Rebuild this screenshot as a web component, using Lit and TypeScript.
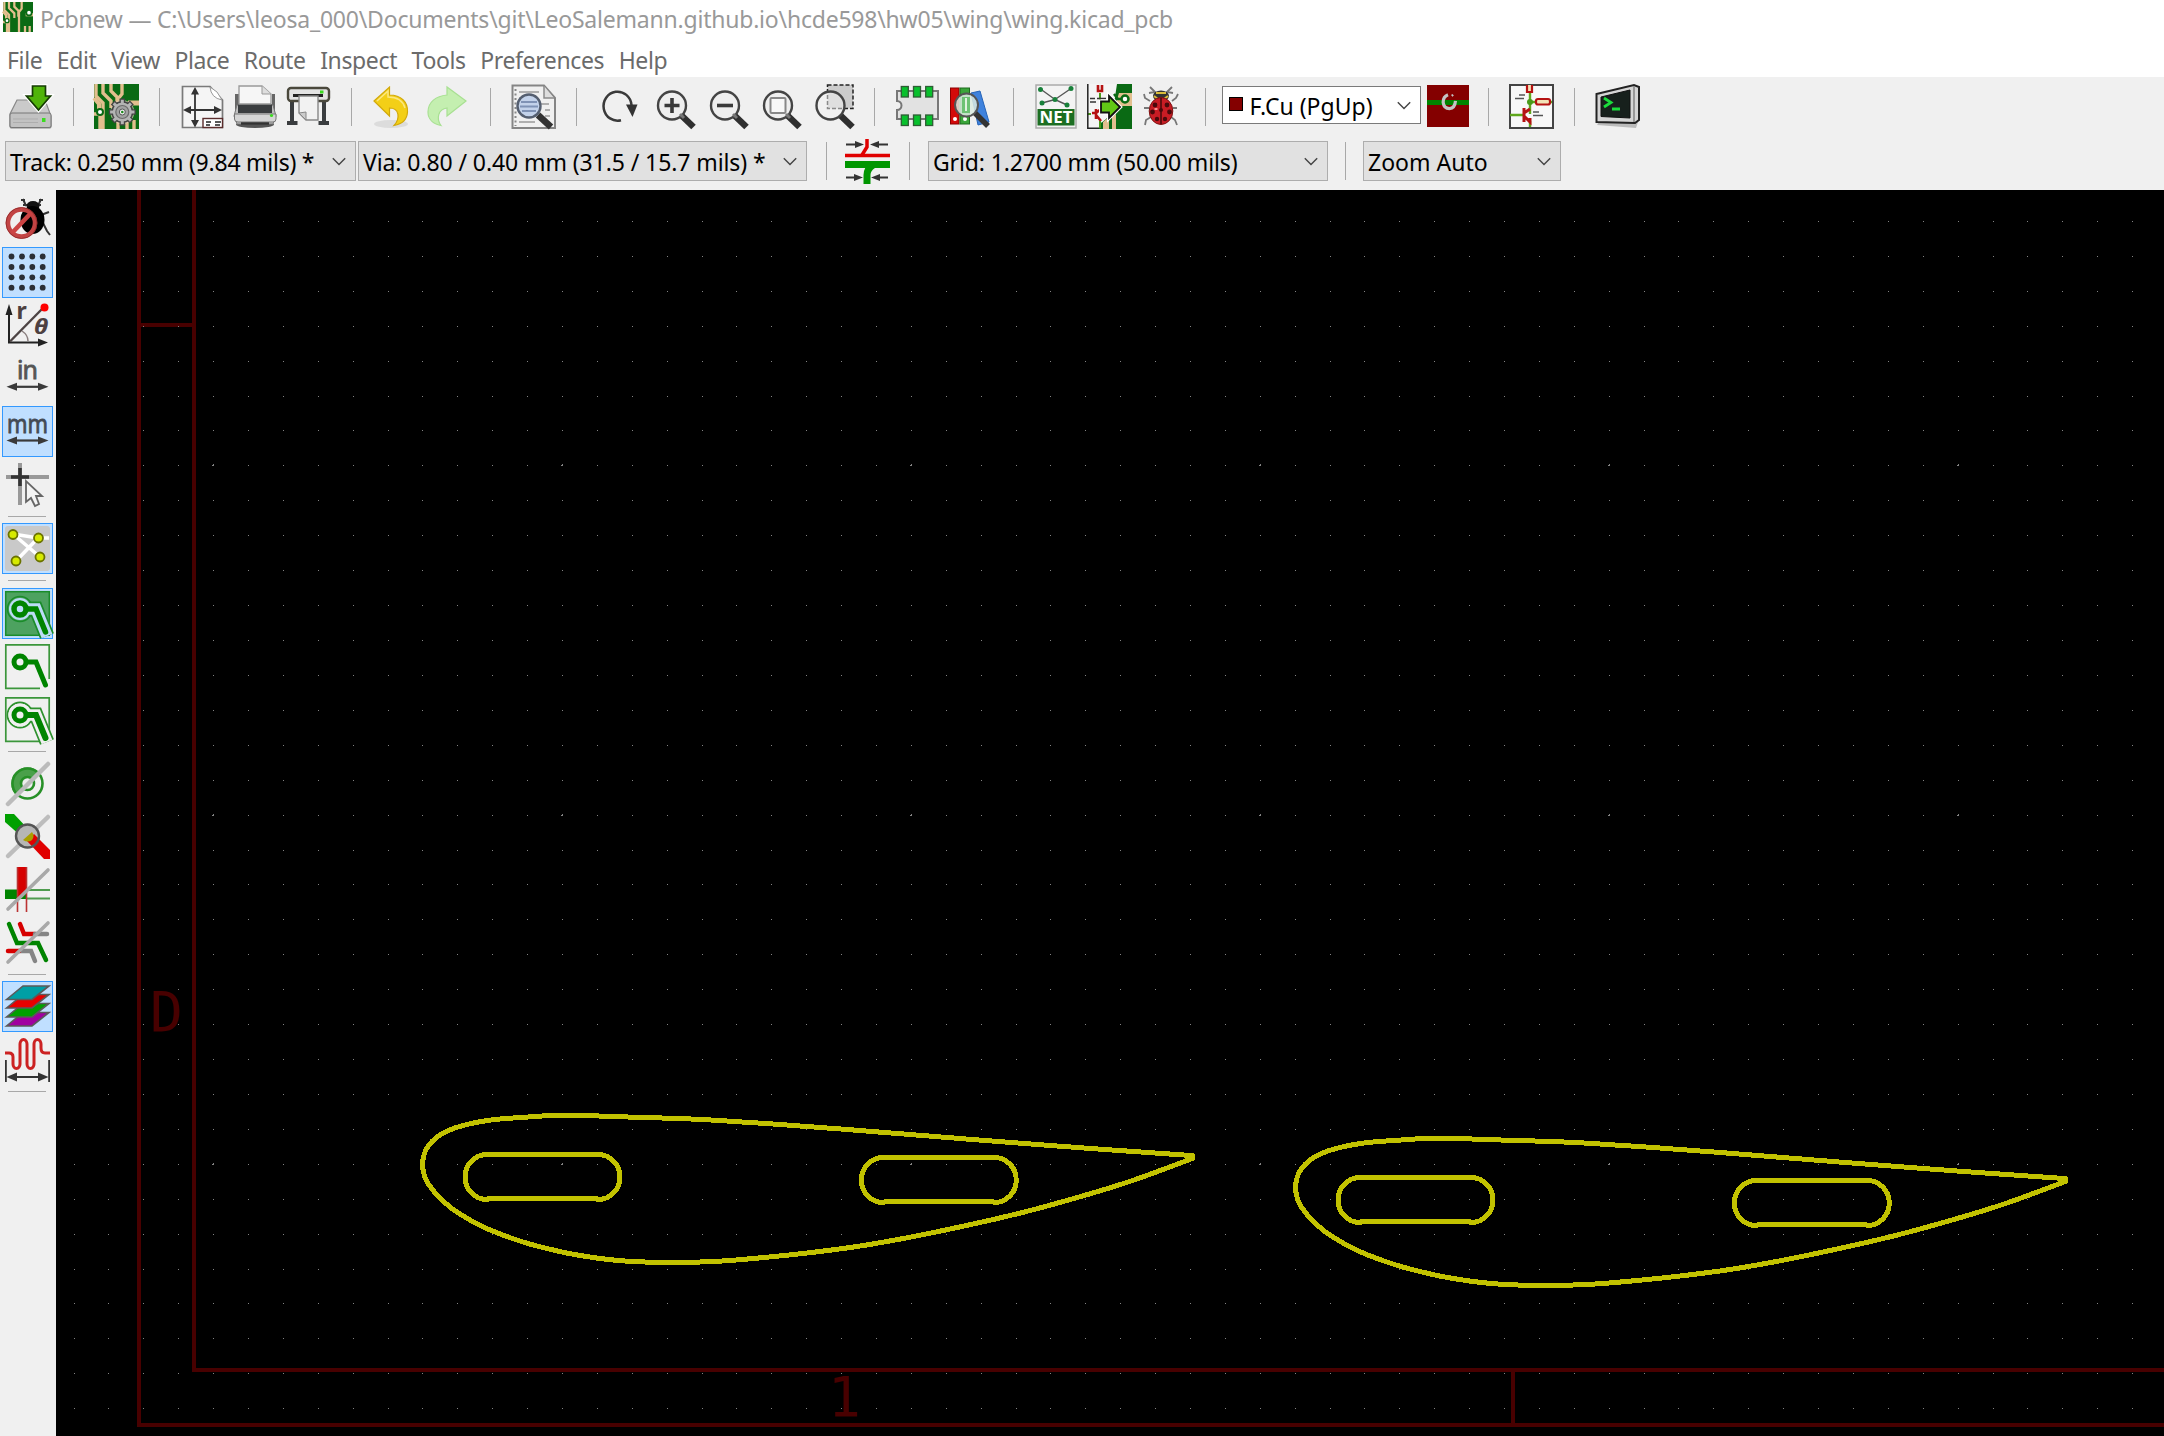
import { LitElement, html, svg, css, TemplateResult } from "lit";
import { customElement, property } from "lit/decorators.js";

type Glyph = TemplateResult;

const board = svg`
  <rect width="45" height="45" fill="#0a6a14"/>
  <path d="M2 0V12L9 19V45M9 0V9L17 17V24M17 0V7L23 13V22M28 0V10L24 15V45M0 30H6V45M33 45V36M40 45V36" stroke="#e2bf8e" stroke-width="3.4" fill="none"/>
  <path d="M0 14L5 20V27" stroke="#e2bf8e" stroke-width="4" fill="none"/>
  <path d="M34 19H45" stroke="#e2bf8e" stroke-width="5"/>
  <circle cx="6" cy="28" r="3" fill="#fff" stroke="#0a6a14" stroke-width="2"/>
`;
const lens = (inner: Glyph) => svg`
  <path d="M31 31L43.500 43" stroke="#2f2f2f" stroke-width="6.500"/>
  <circle cx="22" cy="21.500" r="14" fill="#efefef" stroke="#444" stroke-width="2.400"/>
  <path d="M30 30L34 34" stroke="#777" stroke-width="3"/>${inner}`;
const slash = svg`<path d="M3 42L43 3" stroke="#a9a9a9" stroke-width="3.600" stroke-linecap="round"/>`;
const hArrow = (y: number) => svg`
  <path d="M8 ${y}H38" stroke="#3a3a3a" stroke-width="2.200"/>
  <path d="M1.500 ${y}L12 ${y - 4}V${y + 4}ZM43.500 ${y}L33 ${y - 4}V${y + 4}Z" fill="#3a3a3a"/>`;

const glyphs: Record<string, Glyph> = {
  save: svg`
    <path d="M9 16H37L43 32V42Q43 44 41 44H4Q2 44 2 42V30Z" fill="#cacaca" stroke="#888" stroke-width="1.200"/>
    <path d="M2 31Q2 29 4 29H41Q43 29 43 31V42Q43 43.500 41 43.500H4Q2 43.500 2 42Z" fill="#c2c2c2" stroke="#777"/>
    <path d="M5 35H30M5 38.500H30" stroke="#adadad"/>
    <rect x="34" y="34" width="3.500" height="4" fill="#3bdc20"/>
    <path d="M24.500 2H37.500V12H42.500L30.500 26L18.500 12H24.500Z" fill="#50b40a" stroke="#fff" stroke-width="4"/>
    <path d="M24.500 2H37.500V12H42.500L30.500 26L18.500 12H24.500Z" fill="#50b40a" stroke="#163c04" stroke-width="1.700"/>`,
  boardSetup: svg`${board}
    <g transform="translate(28.300 28)">
      <circle r="12" fill="#e8d8bf" fill-opacity=".7"/>
      <g stroke="#444" stroke-width="5.500">${[0, 45, 90, 135].map((a) => svg`<path d="M-13.500 0H13.500" transform="rotate(${a})"/>`)}</g>
      <circle r="10.300" fill="#b4b4b4" stroke="#444" stroke-width="1.500"/>
      <g stroke="#b4b4b4" stroke-width="3">${[0, 45, 90, 135].map((a) => svg`<path d="M-12.200 0H12.200" transform="rotate(${a})"/>`)}</g>
      <circle r="6.500" fill="#a2a2a2" stroke="#6b6b6b" stroke-width="1.200"/><circle r="3" fill="#f2f2f2" stroke="#555"/><circle r="1.300" fill="#1a8a1a"/>
    </g>`,
  page: svg`
    <path d="M2.500 2.500H30L42.500 16V43.500H2.500Z" fill="#f5f5f5" stroke="#7a7a7a" stroke-width="1.700"/>
    <path d="M30 3Q31 14 42 16L37 8Z" fill="#fff" stroke="#999"/>
    <path d="M15 6V41M6 26H38" stroke="#333" stroke-width="1.800"/>
    <path d="M15 3L11 10.500H19ZM15 43.500L11 36H19ZM3 26L11 22V30ZM42 26L34 22V30Z" fill="#333"/>
    <rect x="23" y="34.500" width="19.500" height="9" fill="#fff" stroke="#5b2d2d" stroke-width="1.400"/>
    <path d="M26 38H31M35 38H41M26 41H30M35 41H40" stroke="#222" stroke-width="1.600"/>`,
  print: svg`
    <ellipse cx="22" cy="40.500" rx="19" ry="3.500" fill="#555"/>
    <path d="M2 10H6V30H2ZM39 10H42V30H39Z" fill="#666"/>
    <path d="M4 21H40L43 32L40 40H4L1 32Z" fill="#c0c0c0" stroke="#777"/>
    <path d="M5 20H39V29H5Z" fill="#3a3d3f"/>
    <path d="M6 2H29L38 10V20H6Z" fill="#f6f6f6" stroke="#999" stroke-width="1.300"/>
    <path d="M29 2V10H38" fill="#ddd" stroke="#999"/>
    <path d="M1.500 30H43V35Q43 38 40 38H5Q1.500 38 1.500 35Z" fill="#d5d5d5" stroke="#777"/>
    <path d="M8 39.500H36" stroke="#333" stroke-width="2.500"/>
    <circle cx="38.500" cy="31.500" r="1.600" fill="#3bdc20"/>`,
  plot: svg`
    <path d="M6 17V39M38 17V39" stroke="#3a3d3f" stroke-width="4"/>
    <path d="M1 39H11.500M32.500 39H43" stroke="#3a3d3f" stroke-width="4"/>
    <rect x="2" y="4" width="41" height="13" rx="3" fill="#e3e3e3" stroke="#4a483c" stroke-width="2.400"/>
    <path d="M7 11.500H37" stroke="#222" stroke-width="3"/>
    <rect x="34" y="6.500" width="3.500" height="3" fill="#3bdc20"/>
    <path d="M13 12H32V36H20L13 29Z" fill="#f2f2f2" stroke="#888" stroke-width="1.400"/>
    <path d="M13 29L20 28V36Z" fill="#ccc" stroke="#888"/>`,
  undo: svg`
    <ellipse cx="19" cy="40" rx="17" ry="4" fill="#dcdcdc"/>
    <path d="M2 17L17.500 3V11C29 11 36 18 35.500 28C35 35 31 40 22 41.500C28 35 28 24 17.500 24V32Z" fill="#f3cf17" stroke="#d2a90c" stroke-width="1.200"/>
    <path d="M5 17L16 7V13C25 13 31 17 33 24" fill="none" stroke="#fbe780" stroke-width="1.500"/>`,
  redo: svg`
    <path d="M41 17L22 3V11C11 12 3 18 3 28C3 35 8 40 16 41.500C11 35 13 25 22 24V32Z" fill="#c4efb0" stroke="#a8e092" stroke-width="1.200"/>`,
  find: svg`
    <path d="M1.500 1.500H33L44 14V44H1.500Z" fill="#f0f0f0" stroke="#858585" stroke-width="2"/>
    <path d="M33 2V14H43" fill="#ddd" stroke="#8a8a8a" stroke-width="1.500"/>
    <path d="M8 8H28M8 14H26M30 20H38M34 26H39M34 32H39M8 38H24" stroke="#999" stroke-width="1.600"/>
    <path d="M4.500 5V42" stroke="#888" stroke-width="2" stroke-dasharray="2 2.500"/>
    <path d="M27 31L40 43" stroke="#333" stroke-width="6.500"/>
    <circle cx="18" cy="22" r="11.500" fill="#c3d2ea" stroke="#555f70" stroke-width="2.400"/>
    <path d="M10 18H26M9 22.500H27M11 27H25" stroke="#7f92b5" stroke-width="2"/>`,
  refresh: svg`
    <path d="M25 36.200A14 14.500 0 1 1 35.500 21" fill="none" stroke="#3a3a3a" stroke-width="2.500"/>
    <path d="M30 20.500H41.500L36.500 33Z" fill="#333"/>`,
  zoomIn: lens(svg`<path d="M14.500 21.500H29.500M22 14V29" stroke="#3a3a3a" stroke-width="3.600"/>`),
  zoomOut: lens(svg`<path d="M14 21.500H30" stroke="#3a3a3a" stroke-width="3.600"/>`),
  zoomFit: lens(svg`<rect x="14.500" y="14" width="15" height="15" rx="1" fill="#f8f8f8" stroke="#888" stroke-width="2"/>`),
  zoomSel: svg`
    <rect x="18.500" y="1" width="25.500" height="23.500" fill="#ccc" stroke="#222" stroke-width="1.500" stroke-dasharray="4 2"/>
    <path d="M31 31L43.500 43" stroke="#2f2f2f" stroke-width="6.500"/>
    <circle cx="21.500" cy="21.500" r="14" fill="#f2f2f2" fill-opacity=".5" stroke="#444" stroke-width="2.400"/>`,
  module: svg`
    <path d="M2 7H43V35H2V26A4 4 0 0 0 2 17Z" fill="#e2e2e2" stroke="#777" stroke-width="2"/>
    <g fill="#08c02c" stroke="#2f5c35" stroke-width="1.300">
      ${[6.300, 18.500, 30.700].map((x) => svg`<rect x="${x}" y="2.500" width="7" height="10.500"/><rect x="${x}" y="31" width="7" height="10.500"/>`)}
    </g>`,
  library: svg`
    <rect x="2.500" y="4" width="8.500" height="36" fill="#d40a0a" stroke="#8a0000"/>
    <rect x="12" y="4" width="9.500" height="36" fill="#3aa53a" stroke="#1c6a1c"/>
    <path d="M23 9L32 7L41 38L30 41Z" fill="#3f82dd" stroke="#2563b8"/>
    <circle cx="7" cy="35" r="2" fill="#fff"/><circle cx="17" cy="35" r="2" fill="#fff"/>
    <path d="M27 29L40 42" stroke="#333" stroke-width="5.500"/>
    <circle cx="18.500" cy="21" r="11.500" fill="#dcebe2" fill-opacity=".85" stroke="#555" stroke-width="2"/>
    <rect x="14" y="13" width="8" height="16" fill="#6cc274"/>
    <path d="M18 14V27" stroke="#dff2df" stroke-width="2"/>`,
  netlist: svg`
    <rect x="2" y="1" width="40" height="43" fill="#f3f3f3" stroke="#aaa" stroke-width="1.500"/>
    <path d="M6.500 5L21 15.500L37 4.500M8 19L21 15.500L33 21" stroke="#555" stroke-width="1.400" fill="none"/>
    <g fill="#18803a"><circle cx="6.500" cy="5.500" r="2.500"/><circle cx="37" cy="4.500" r="2.500"/><circle cx="21" cy="15.500" r="2.500"/><circle cx="8" cy="19" r="2.500"/><circle cx="33" cy="21" r="2.500"/></g>
    <rect x="3.500" y="25" width="37" height="16.500" fill="#1c6e22"/>
    <text x="22" y="39.300" text-anchor="middle" textLength="33" lengthAdjust="spacingAndGlyphs" font-size="16.500" font-weight="700" fill="#fff">NET</text>`,
  update: svg`
    <rect width="45" height="45" fill="#f4f4f4"/>
    <path d="M30 0H45V45H12V40Q20 36 26 26Z" fill="#0a6a14"/>
    <path d="M45 9H32L28 22H45ZM16 45V38L22 33V45ZM25 45V33L29 30V45Z" fill="#e2bf8e"/>
    <path d="M27 10L31 15H38" stroke="#0a6a14" stroke-width="2.500" fill="none"/>
    <circle cx="38" cy="15" r="3.500" fill="#fff" stroke="#0a6a14" stroke-width="2.500"/>
    <path d="M11 1V7H15V1M5 29H9L14 25M9 25V35M9 31L14 37" fill="none" stroke="#b51212" stroke-width="2.600"/>
    <path d="M13 9V16M0 30H4M13 37V44" stroke="#4a9a1a" stroke-width="2"/>
    <path d="M3 14.500H8M10 14.500H19M3 18H9" stroke="#333" stroke-width="1.500"/>
    <path d="M.8 0V44.200H12" fill="none" stroke="#222" stroke-width="1.500"/>
    <path d="M14 17.500H22V12L33 23L22 34V28.500H14Z" fill="#62c716" stroke="#fff" stroke-width="4"/>
    <path d="M14 17.500H22V12L33 23L22 34V28.500H14Z" fill="#62c716" stroke="#111" stroke-width="1.800"/>`,
  ladybug: svg`
    <path d="M10 3L15 8L9 9M32 3L27 8L33 9M10 17L5 14L4 10M32 17L36 14L38 10M9 24H4M33 24H37M11 33L6 36L5 41M31 33L35 36L37 41" stroke="#777" stroke-width="1.800" fill="none"/>
    <ellipse cx="21" cy="12" rx="8" ry="5.500" fill="#333"/>
    <path d="M14 12L18 15M28 12L24 15M16 9H26" stroke="#d9bb3a" stroke-width="2"/>
    <ellipse cx="21" cy="27" rx="11.800" ry="13.500" fill="#c81c24" stroke="#7b1010"/>
    <path d="M21 14V40" stroke="#3a0a0a" stroke-width="1.400"/>
    <g fill="#4a0a0c"><circle cx="15" cy="21" r="2.400"/><circle cx="27" cy="21" r="2.400"/><circle cx="12.500" cy="28" r="2.400"/><circle cx="29.500" cy="28" r="2.400"/><circle cx="17" cy="35" r="2.200"/><circle cx="25" cy="35" r="2.200"/><circle cx="21" cy="26" r="2"/></g>
    <ellipse cx="16" cy="25" rx="1.800" ry="1" fill="#ff9a9a"/>`,
  layerPair: svg`
    <rect width="45" height="45" fill="#840000"/>
    <path d="M0 18.700H45" stroke="#008400" stroke-width="5.500"/>
    <path d="M22.500 10.500Q17.300 12.500 17.300 18.500Q18 25.300 24 25.300Q30 24.800 30.500 17" fill="none" stroke="#c4c4c4" stroke-width="3.400"/>
    <path d="M26.500 10.200L28 12" stroke="#c4c4c4" stroke-width="2"/>`,
  schematic: svg`
    <rect x="1" y="1" width="43" height="43" fill="#f8f8f8" stroke="#444" stroke-width="2"/>
    <path d="M21 2V30M21 18H43M1 31H14M21 37V43" stroke="#5fa81c" stroke-width="2.400"/>
    <path d="M18 1V8H23V1" fill="#f3e2b6" stroke="#b51212" stroke-width="2.200"/>
    <rect x="27" y="15" width="14" height="5.500" rx="2" fill="#f3e2b6" stroke="#b51212" stroke-width="2.200"/>
    <circle cx="21" cy="18" r="3" fill="#4a9a1a"/>
    <path d="M15 24V38M15 29L21 25M15 32L21 38V34" stroke="#b51212" stroke-width="3" fill="none"/>
    <path d="M10 11H16M6 14.500H15M24 28H30M24 31.500H34" stroke="#555" stroke-width="1.600"/>`,
  terminal: svg`
    <path d="M2 41L41 44L43 38H4Z" fill="#bbb"/>
    <path d="M1.500 10L39 1L44 3V36L40 39L1.500 38Z" fill="#d5d5d5" stroke="#222" stroke-width="2"/>
    <path d="M39 2V38" stroke="#888" stroke-width="1.600"/>
    <path d="M6 13L35 6V34L6 32.500Z" fill="#17201c" stroke="#111"/>
    <path d="M9 14L16 18.500L9 23M17 25H25" stroke="#1bdc3c" stroke-width="2.800" fill="none"/>`,
  trackWidth: svg`
    <path d="M0 16.500H45" stroke="#e00000" stroke-width="3.500"/>
    <path d="M22 0V8L17 16" stroke="#e00000" stroke-width="3.500" fill="none"/>
    <path d="M0 25.500H45" stroke="#009600" stroke-width="7"/>
    <path d="M28 26Q22 30 22 36V45" stroke="#009600" stroke-width="7" fill="none"/>
    <path d="M1 5.500H12M32 5.500H43M1 38.500H12M32 38.500H43" stroke="#333" stroke-width="2"/>
    <path d="M19 5.500L10 2V9ZM25 5.500L34 2V9ZM18 38.500L9 35V42ZM26 38.500L35 35V42Z" fill="#333"/>`,
  drcOff: svg`
    <path d="M21 9L18 2M33 9L36 2M16 3H20M34 3H38M36 18L44 15M38 26L42 34L45 38M18 8H36" stroke="#333" stroke-width="2" fill="none"/>
    <ellipse cx="28" cy="9" rx="6.500" ry="5" fill="#111"/>
    <ellipse cx="27.500" cy="23" rx="12" ry="14" fill="#000"/>
    <circle cx="16.500" cy="26" r="13.500" fill="none" stroke="#c24444" stroke-width="4.500"/>
    <path d="M7 36L26 16" stroke="#c44" stroke-width="4.500"/>
    <circle cx="16.500" cy="26" r="15.500" fill="none" stroke="#8e2626" stroke-width=".8"/>`,
  grid: svg`<g fill="#2b2f36">${[6.500, 17, 27.300, 37.700].map((y) => [6.500, 17, 27.300, 37.700].map((x) => svg`<circle cx="${x}" cy="${y}" r="2.900"/>`))}</g>`,
  polar: svg`
    <path d="M4 8V39.500H36" stroke="#222" stroke-width="2" fill="none"/>
    <path d="M4 1L.5 12H7.500ZM43 39.500L33 35.500V43.500Z" fill="#222"/>
    <path d="M5 38.500L39 4" stroke="#4d4444" stroke-width="2.400"/>
    <path d="M17 28Q23 32 23 38" stroke="#8a7f7f" stroke-width="1.500" fill="none"/>
    <circle cx="39.500" cy="4.500" r="4" fill="#f00"/>
    <text x="11.500" y="16" font-size="23" font-weight="700" fill="#4d4040">r</text>
    <text x="29" y="31" font-size="21.500" font-weight="700" font-style="italic" textLength="14" lengthAdjust="spacingAndGlyphs" fill="#4d4040">θ</text>`,
  inches: svg`<text x="22.500" y="23" text-anchor="middle" textLength="21" font-size="25" fill="#555" stroke="#555" stroke-width=".8">in</text>${hArrow(30.800)}`,
  millimetres: svg`<text x="22.500" y="23.500" text-anchor="middle" textLength="41" lengthAdjust="spacingAndGlyphs" font-size="25" fill="#444b55" stroke="#444b55" stroke-width=".8">mm</text>${hArrow(31.500)}`,
  cursor: svg`
    <path d="M15 1V43M1 15H44" stroke="#999" stroke-width="4"/>
    <path d="M15 6V24M6 15H24" stroke="#333" stroke-width="3.600"/>
    <path d="M21 19V40L26 36L30 44L34 42L31 34H37Z" fill="#f4f4f4" stroke="#666" stroke-width="1.800"/>`,
  ratsnest: svg`
    <rect width="45" height="45" rx="3" fill="#c9c9c9"/>
    <path d="M8 8L33 12L44 12M8 8L35 31M33 12L11 35" stroke="#fff" stroke-width="3.600" fill="none"/>
    <g fill="#d6ea00" stroke="#6b7300" stroke-width="1.800"><circle cx="8" cy="8.500" r="4.500"/><circle cx="33.500" cy="12" r="4.500"/><circle cx="35" cy="31" r="4.500"/><circle cx="11" cy="35" r="4.500"/></g>`,
  zoneFill: svg`
    <rect x=".7" y=".7" width="43.600" height="43.600" fill="#4da260" stroke="#1a8c2a" stroke-width="1.500"/>
    <circle cx="15" cy="18" r="12.500" fill="none" stroke="#1a8c2a" stroke-width="1.500"/>
    <path d="M15 18H31L42 45" stroke="#1a8c2a" stroke-width="15" fill="none"/>
    <path d="M15 18H31L42 45" stroke="#bcdcf6" stroke-width="11.500" fill="none"/>
    <circle cx="15" cy="18" r="11" fill="#bcdcf6"/>
    <path d="M15 18H31L40.500 41" stroke="#008400" stroke-width="5.500" stroke-linecap="round" fill="none"/>
    <circle cx="15" cy="18" r="6" fill="#c0dfff" stroke="#008400" stroke-width="5.500"/>`,
  zoneNone: svg`
    <path d="M35 44.300H.8V.8H44.200V35" fill="none" stroke="#3b963b" stroke-width="1.700"/>
    <path d="M15 18H31L40.500 41" stroke="#008400" stroke-width="5" stroke-linecap="round" fill="none"/>
    <circle cx="15" cy="18" r="6" fill="#f0f0f0" stroke="#008400" stroke-width="5"/>`,
  zoneOutline: svg`
    <path d="M36 44.300H.8V.8H44.200V36" fill="none" stroke="#3b963b" stroke-width="1.700"/>
    <circle cx="15" cy="18" r="12.500" fill="#f0f0f0" stroke="#2e922e" stroke-width="1.800"/>
    <path d="M15 18H31L42 45" stroke="#2e922e" stroke-width="15" fill="none"/>
    <path d="M15 18H31L42 45" stroke="#f0f0f0" stroke-width="11.500" fill="none"/>
    <circle cx="15" cy="18" r="11.600" fill="#f0f0f0"/>
    <path d="M15 18H31L40.500 41" stroke="#008400" stroke-width="6" stroke-linecap="round" fill="none"/>
    <circle cx="15" cy="18" r="6" fill="#f0f0f0" stroke="#008400" stroke-width="5"/>`,
  padSketch: svg`
    <circle cx="22.500" cy="22.500" r="15" fill="#f0f0f0"/>
    <path d="M11 34A16 16 0 0 1 34 11Z" fill="#4aa04a"/>
    <circle cx="22.500" cy="22.500" r="15" fill="none" stroke="#279027" stroke-width="2.600"/>
    <circle cx="22.500" cy="22.500" r="6.500" fill="#eee" stroke="#279027" stroke-width="2.600"/>
    <path d="M3 43L43 3" stroke="#bbb" stroke-width="4.500" stroke-linecap="round"/>`,
  viaSketch: svg`
    <path d="M0 0H9L24 16L16 22L0 8Z" fill="#00a000"/>
    <path d="M3 42L43 3" stroke="#bdbdbd" stroke-width="4.500" stroke-linecap="round"/>
    <circle cx="22.500" cy="22" r="11.500" fill="#b6b6b6"/>
    <path d="M22 27L29 20L45 36V45H39Z" fill="#e00000"/>
    <path d="M18 26L27 18Q30 22 27 26Q23 29 18 26Z" fill="#a8a000"/>
    <circle cx="22.500" cy="22" r="11.500" fill="none" stroke="#555" stroke-width="2.400"/>`,
  trackSketch: svg`
    <path d="M0 22.500H22V32H0Z" fill="#008400"/>
    <path d="M12 0H22V23L12 33Z" fill="#d60000"/>
    <path d="M22 23H45M22 31.500H45" stroke="#4f9c4f" stroke-width="2"/>
    <path d="M12.500 0V45M21.500 0V45" stroke="#b33" stroke-width="1.600"/>${slash}`,
  contrast: svg`
    <path d="M4 4L12 23H33L41 40" stroke="#008400" stroke-width="4.500" stroke-linecap="round" fill="none"/>
    <path d="M15 4L19 14H30" stroke="#d60000" stroke-width="4.500" stroke-linecap="round" fill="none"/>
    <path d="M30 14H42M14 31H26L30 41" stroke="#858585" stroke-width="4.500" stroke-linecap="round" fill="none"/>
    <path d="M3 31H14" stroke="#d60000" stroke-width="4.500" stroke-linecap="round"/>${slash}`,
  layers: svg`
    <g stroke="#5a5a5a" stroke-width="1.600">
      <path d="M1.500 42L18 28.500H44L27 42Z" fill="#a000a0"/>
      <path d="M1.500 33L18 19.500H44L27 33Z" fill="#00a000"/>
      <path d="M1.500 24L18 10.500H44L27 24Z" fill="#e80000"/>
      <path d="M1.500 15.500L18 2H44L27 15.500Z" fill="#009fa5"/>
    </g>`,
  meander: svg`
    <path d="M0 16H4Q8 16 8 20V27A3.500 4.500 0 0 0 15 27V7A3.500 4.500 0 0 1 22 7V27A3.500 4.500 0 0 0 29 27V7A3.500 4.500 0 0 1 36 7V11Q36 16 40 16H45" fill="none" stroke="#cc2222" stroke-width="3"/>
    <path d="M.9 23V45M44.100 23V45" stroke="#333" stroke-width="1.800"/>
    <path d="M4 40H41" stroke="#333" stroke-width="2"/>
    <path d="M1.500 40L12 35.500V44.500ZM43.500 40L33 35.500V44.500Z" fill="#333"/>`,
  appMark: svg`${board}<circle cx="39" cy="16" r="4" fill="#fff" stroke="#0a6a14" stroke-width="2.500"/>`,
};

@customElement("pcb-icon")
class PcbIcon extends LitElement {
  static styles = css`
    :host { display: block; flex: none; width: 45px; height: 45px; }
    .art { display: block; width: 100%; height: 100%; overflow: visible; font-family: "Noto Sans", sans-serif; }
  `;
  @property() name = "save";
  render() {
    return html`<svg class="art" viewBox="0 0 45 45">${glyphs[this.name]}</svg>`;
  }
}

@customElement("pcb-choice")
class PcbChoice extends LitElement {
  static styles = css`
    :host { display: flex; flex: none; box-sizing: border-box; align-items: center; justify-content: space-between;
      height: 40px; padding: 2px 9px 0 4px; background: #e1e1e1; border: 1px solid #adadad; color: #000; white-space: nowrap; }
    :host([field]) { height: 38px; background: #fff; border-color: #7a7a7a; padding: 2px 9px 0 6px; }
    .value { display: flex; align-items: center; gap: 6px; }
    .swatch { width: 12px; height: 12px; margin-top: -4px; background: #840000; border: 1px solid #000; }
    .arrow { flex: none; width: 14px; height: 9px; margin-top: -2px; }
  `;
  @property({ type: Boolean, reflect: true }) field = false;
  render() {
    return html`
      <span class="value">${this.field ? html`<span class="swatch"></span>` : null}<slot></slot></span>
      <svg class="arrow" viewBox="0 0 14 9"><path d="M.8 1.200L7 7.500L13.200 1.200" fill="none" stroke="#444" stroke-width="1.400"/></svg>`;
  }
}

const range = (n: number) => Array.from({ length: n }, (_, i) => i);

type Point = [number, number];

// Airfoil outline from the upper trailing edge corner, round the nose, to the lower one.
const airfoil: Point[] = [
  [1192.400, 1155.600], [1080, 1147.700], [975, 1139.700], [844.500, 1129.300], [766, 1123.500], [706, 1119.700], [661.500, 1118],
  [617, 1116.700], [585.500, 1115.600], [551.500, 1115.600], [531, 1116.800], [497, 1119.300], [478.500, 1122], [463, 1125.500],
  [449.500, 1130], [440, 1135], [432.500, 1141], [427, 1148], [424, 1155], [422.500, 1165], [424, 1174], [427.700, 1183],
  [439, 1197], [457.500, 1212.500], [486, 1228.200], [523, 1242], [559.500, 1251.500], [580.500, 1255.500], [600, 1258.500],
  [625, 1261], [653.500, 1262.300], [677, 1262.500], [700.500, 1262], [727, 1260.700], [766, 1257.300], [808, 1252.900],
  [855, 1246.800], [907, 1237.800], [965, 1225.800], [1022.400, 1212.500], [1080, 1196.700], [1132, 1180.700], [1192.400, 1158.500],
];

const smooth = (pts: Point[]) => {
  let d = `M${pts[0][0]} ${pts[0][1]}`;
  for (let i = 0; i < pts.length - 1; i++) {
    const a = pts[Math.max(i - 1, 0)], b = pts[i], c = pts[i + 1], e = pts[Math.min(i + 2, pts.length - 1)];
    d += `C${b[0] + (c[0] - a[0]) / 6} ${b[1] + (c[1] - a[1]) / 6} ${c[0] - (e[0] - b[0]) / 6} ${c[1] - (e[1] - b[1]) / 6} ${c[0]} ${c[1]}`;
  }
  return d + "Z";
};

@customElement("pcb-canvas")
class PcbCanvas extends LitElement {
  static styles = css`
    :host { display: block; background: #000; overflow: hidden; }
    .sheet { display: block; width: 2108px; height: 1246px; }
    .dots { fill: #848484; shape-rendering: crispEdges; }
    .frame { fill: #480000; shape-rendering: crispEdges; }
    .mark { fill: #480000; font: 54.500px "DejaVu Sans Mono", monospace; }
    .edge { fill: none; stroke: #c2c200; stroke-width: 5; stroke-linejoin: round; shape-rendering: crispEdges; }
  `;

  private dots() {
    let d = "";
    for (const r of range(35)) {
      const y = Math.floor(221.440 + r * 34.920);
      for (const c of range(60)) {
        const x = Math.floor(74.050 + c * 34.890);
        d += `M${x} ${y}h1v1h-1z`;
        if (c % 10 === 4 && r % 10 === 7) d += `M${x} ${y - 1}h1v1h-1zM${x - 1} ${y}h1v1h-1z`;
      }
    }
    return d;
  }

  private slotShape(x: number, y: number) {
    return svg`<path class="edge" d="M${x + 22} ${y}H${x + 133}A22 22.500 0 0 1 ${x + 133} ${y + 45}L${x + 131} ${y + 44}H${x + 24}L${x + 22} ${y + 45}A22 22.500 0 0 1 ${x + 22} ${y}Z"/>`;
  }

  private rib(dx: number, dy: number) {
    return svg`<g transform="translate(${dx} ${dy})">
      <path class="edge" d="${smooth(airfoil)}"/>
      ${this.slotShape(465, 1154.500)}${this.slotShape(861.300, 1157.500)}
    </g>`;
  }

  render() {
    return html`<svg class="sheet" viewBox="56 190 2108 1246">
      <path class="frame" d="M137 190H141V1423H2164V1427H137ZM192 190H196V1368H2164V1372H192ZM141 323H192V327H141ZM1511 1372H1515V1423H1511Z"/>
      <path class="dots" d="${this.dots()}"/>
      <text class="mark" x="150" y="1031">D</text>
      <text class="mark" x="828" y="1416">1</text>
      ${this.rib(0, 0)}${this.rib(873, 23)}
    </svg>`;
  }
}

const menus = ["File", "Edit", "View", "Place", "Route", "Inspect", "Tools", "Preferences", "Help"];
const mainTools = ["save", "|", "boardSetup", "|", "page", "print", "plot", "|", "undo", "redo", "|", "find", "|", "refresh",
  "zoomIn", "zoomOut", "zoomFit", "zoomSel", "|", "module", "library", "|", "netlist", "update", "ladybug", "|"];
const sideTools = ["drcOff", "grid*", "polar", "inches", "millimetres*", "cursor", "|", "ratsnest*", "|", "zoneFill*", "zoneNone",
  "zoneOutline", "|", "padSketch", "viaSketch", "trackSketch", "contrast", "|", "layers*", "meander", "|"];

@customElement("app-root")
class AppRoot extends LitElement {
  static styles = css`
    :host { display: block; font-family: "Noto Sans", "Open Sans", sans-serif; font-size: 23px; line-height: 30px; }
    .window { display: flex; flex-direction: column; width: 2164px; height: 1436px; overflow: hidden; background: #f0f0f0; }
    .title { display: flex; align-items: center; height: 38px; background: #fff; color: #999; padding-left: 3px; gap: 7px; white-space: nowrap; }
    .mark { width: 30px; height: 30px; margin-top: -4px; }
    .caption { letter-spacing: -0.210px; }
    .menus { display: flex; height: 39px; box-sizing: border-box; padding-top: 4px; align-items: center; gap: 14.500px; padding-left: 7px; background: #fff; color: #6b6b6b; letter-spacing: -0.370px; }
    .bar { display: flex; align-items: center; }
    .main { height: 59px; gap: 8.200px; padding-left: 8px; }
    .options { height: 50px; margin-bottom: 4px; padding-left: 5px; gap: 2px; }
    .rule { flex: none; width: 24.400px; height: 38px; display: flex; justify-content: center; }
    .rule::before { content: ""; width: 1px; background: #a8a8a8; }
    .options .rule { width: 34px; }
    .options .narrow { width: 31px; }
    .layer { width: 199px; margin: -3px 0 0 -3.600px; }
    .pair { width: 42px; height: 42px; margin: -1px 0 0 -3px; }
    .track { width: 351px; letter-spacing: -0.240px; }
    .via { width: 449px; letter-spacing: -0.090px; }
    .gridsize { width: 400px; letter-spacing: -0.140px; }
    .zoom { width: 198px; }
    .body { display: flex; flex: 1; min-height: 0; }
    .side { flex: none; width: 56px; box-sizing: border-box; display: flex; flex-direction: column; gap: 2px; padding: 4px 0 0 2px; }
    .tool { flex: none; box-sizing: border-box; width: 51px; height: 51px; padding: 2px; border: 1px solid transparent; }
    .tool.on { background: #c0dfff; border-color: #3399ff; }
    .split { flex: none; width: 38px; height: 1px; margin: 4px 0 4.250px 6px; background: #a8a8a8; }
    .view { flex: none; width: 2108px; }
  `;

  render() {
    return html`<div class="window">
      <div class="title"><pcb-icon class="mark" name="appMark"></pcb-icon>
        <span class="caption">Pcbnew — C:\\Users\\leosa_000\\Documents\\git\\LeoSalemann.github.io\\hcde598\\hw05\\wing\\wing.kicad_pcb</span></div>
      <div class="menus">${menus.map((m) => html`<span>${m}</span>`)}</div>
      <div class="bar main">
        ${mainTools.map((t) => (t === "|" ? html`<span class="rule"></span>` : html`<pcb-icon name=${t}></pcb-icon>`))}
        <pcb-choice class="layer" field>F.Cu (PgUp)</pcb-choice>
        <pcb-icon class="pair" name="layerPair"></pcb-icon>
        <span class="rule"></span><pcb-icon name="schematic"></pcb-icon>
        <span class="rule"></span><pcb-icon name="terminal"></pcb-icon>
      </div>
      <div class="bar options">
        <pcb-choice class="track">Track: 0.250 mm (9.84 mils) *</pcb-choice>
        <pcb-choice class="via">Via: 0.80 / 0.40 mm (31.5 / 15.7 mils) *</pcb-choice>
        <span class="rule"></span><pcb-icon name="trackWidth"></pcb-icon><span class="rule"></span>
        <pcb-choice class="gridsize">Grid: 1.2700 mm (50.00 mils)</pcb-choice>
        <span class="rule narrow"></span>
        <pcb-choice class="zoom">Zoom Auto</pcb-choice>
      </div>
      <div class="body">
        <div class="side">
          ${sideTools.map((t) => t === "|"
            ? html`<span class="split"></span>`
            : html`<div class="tool ${t.endsWith("*") ? "on" : ""}"><pcb-icon name=${t.replace("*", "")}></pcb-icon></div>`)}
        </div>
        <pcb-canvas class="view"></pcb-canvas>
      </div>
    </div>`;
  }
}
